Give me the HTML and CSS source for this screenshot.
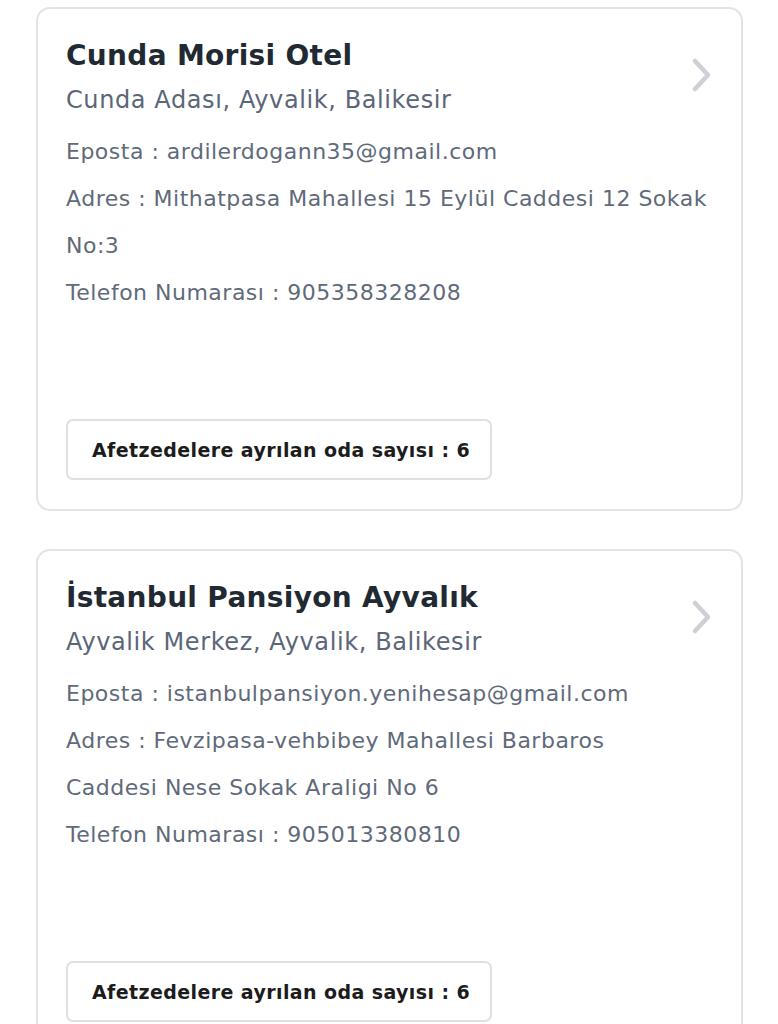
FILE: index.html
```html
<!DOCTYPE html>
<html lang="tr">
<head>
    <meta charset="UTF-8">
    <meta name="viewport" content="width=device-width, initial-scale=1.0">
    <title>Otel Listesi</title>
    <link rel="stylesheet" href="styles.css">
</head>
<body>
    <div class="list">
        <div class="card">
            <div class="card-head">
                <div class="card-titles">
                    <h2 class="hotel-name">Cunda Morisi Otel</h2>
                    <p class="hotel-place">Cunda Adası, Ayvalik, Balikesir</p>
                </div>
                <svg class="chevron" width="22" height="36" viewBox="0 0 22 36">
                    <polyline points="4,4 17,18 4,32" fill="none" stroke="#cdd0d4" stroke-width="4.5" stroke-linecap="round" stroke-linejoin="round"/>
                </svg>
            </div>
            <div class="details">
                <p>Eposta : ardilerdogann35@gmail.com</p>
                <p>Adres : Mithatpasa Mahallesi 15 Eylül Caddesi 12 Sokak No:3</p>
                <p>Telefon Numarası : 905358328208</p>
            </div>
            <div class="rooms">Afetzedelere ayrılan oda sayısı : 6</div>
        </div>

        <div class="card">
            <div class="card-head">
                <div class="card-titles">
                    <h2 class="hotel-name">İstanbul Pansiyon Ayvalık</h2>
                    <p class="hotel-place">Ayvalik Merkez, Ayvalik, Balikesir</p>
                </div>
                <svg class="chevron" width="22" height="36" viewBox="0 0 22 36">
                    <polyline points="4,4 17,18 4,32" fill="none" stroke="#cdd0d4" stroke-width="4.5" stroke-linecap="round" stroke-linejoin="round"/>
                </svg>
            </div>
            <div class="details">
                <p>Eposta : istanbulpansiyon.yenihesap@gmail.com</p>
                <p>Adres : Fevzipasa-vehbibey Mahallesi Barbaros<br>Caddesi Nese Sokak Araligi No 6</p>
                <p>Telefon Numarası : 905013380810</p>
            </div>
            <div class="rooms">Afetzedelere ayrılan oda sayısı : 6</div>
        </div>
    </div>
</body>
</html>
```

FILE: styles.css
```css
body {
    font-family: "DejaVu Sans", sans-serif;
    background-color: #FFFFFF;
    margin: 0;
    padding: 0;
}

.list {
    display: flex;
    flex-direction: column;
    gap: 38px;
    padding: 7px 35px 0 36px;
}

.card {
    box-sizing: border-box;
    height: 504px;
    display: flex;
    flex-direction: column;
    border: 2px solid #e2e4e7;
    border-radius: 14px;
    padding: 29px 28px 29px 28px;
}

.card-head {
    display: flex;
    justify-content: space-between;
    align-items: flex-start;
}

.hotel-name {
    margin: 0;
    font-size: 28px;
    line-height: 36px;
    letter-spacing: 0.3px;
    font-weight: bold;
    color: #212932;
}

.hotel-place {
    margin: 6px 0 0 0;
    font-size: 24px;
    line-height: 40px;
    letter-spacing: 0.6px;
    color: #5b6678;
}

.chevron {
    margin-top: 19px;
    flex-shrink: 0;
}

.details {
    margin-top: 8px;
}

.details p {
    margin: 0;
    font-size: 22px;
    line-height: 47px;
    letter-spacing: 0.5px;
    color: #5f6a7a;
}

.rooms {
    margin-top: auto;
    align-self: flex-start;
    box-sizing: border-box;
    height: 61px;
    display: flex;
    align-items: center;
    padding: 0 20px 0 24px;
    border: 2px solid #dee0e3;
    border-radius: 7px;
    font-size: 19px;
    letter-spacing: 0.4px;
    font-weight: bold;
    color: #1c1c1c;
}
```
